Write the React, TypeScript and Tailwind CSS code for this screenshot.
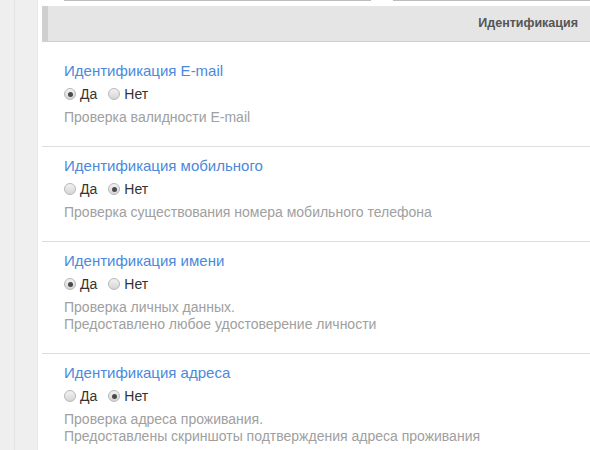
import React from 'react';

interface Check {
  title: string;
  enabled: boolean;
  lines: string[];
}

const checks: Check[] = [
  { title: 'Идентификация E-mail', enabled: true, lines: ['Проверка валидности E-mail'] },
  { title: 'Идентификация мобильного', enabled: false, lines: ['Проверка существования номера мобильного телефона'] },
  {
    title: 'Идентификация имени',
    enabled: true,
    lines: ['Проверка личных данных.', 'Предоставлено любое удостоверение личности'],
  },
  {
    title: 'Идентификация адреса',
    enabled: false,
    lines: ['Проверка адреса проживания.', 'Предоставлены скриншоты подтверждения адреса проживания'],
  },
];

const Radio: React.FC<{ checked: boolean; label: string }> = ({ checked, label }) => (
  <label className="flex items-center gap-[4px]">
    <span className="flex h-[12px] w-[12px] items-center justify-center rounded-full border border-[#b8b8b8] bg-gradient-to-b from-[#f2f2f2] to-[#d6d6d6]">
      {checked && <span className="h-[5px] w-[5px] rounded-full bg-[#4a4a4a]" />}
    </span>
    <span className="text-[14px] text-[#333]">{label}</span>
  </label>
);

export default function App() {
  return (
    <div className="flex h-[450px] w-[590px] overflow-hidden bg-white" style={{ fontFamily: '"Liberation Sans", Arial, sans-serif' }}>
      <div className="flex h-full w-[38px] shrink-0 bg-[#efefef]">
        <div className="w-[15px] border-r border-[#e2e2e2]" />
        <div className="flex-1 border-r border-[#e8e8e8]" />
      </div>
      <div className="ml-[4px] flex-1">
        <div className="flex h-[6px]">
          <div className="ml-[22px] w-[307px] border-t border-[#bdbdbd]" />
          <div className="ml-[22px] flex-1 border-t border-[#bdbdbd]" />
        </div>
        <div className="mb-[10px] flex h-[36px] items-center justify-end border-b border-l-[6px] border-[#cfcfcf] bg-[#e5e5e5] pr-[12px] text-[12.5px] font-bold text-[#555]">
          Идентификация
        </div>
        {checks.map((c, i) => (
          <div key={i} className={`px-[22px] pt-[9px] pb-[20px] ${i < checks.length - 1 ? 'border-b border-[#dddddd]' : ''}`}>
            <div className="text-[15px] leading-[20px] text-[#4a89dc]">{c.title}</div>
            <div className="mt-[3px] flex h-[20px] items-center gap-[11px]">
              <Radio checked={c.enabled} label="Да" />
              <Radio checked={!c.enabled} label="Нет" />
            </div>
            <div className="mt-[5px] text-[14px] leading-[17px] text-[#a0a0a0]">
              {c.lines.map((l, j) => (
                <div key={j}>{l}</div>
              ))}
            </div>
          </div>
        ))}
      </div>
    </div>
  );
}
